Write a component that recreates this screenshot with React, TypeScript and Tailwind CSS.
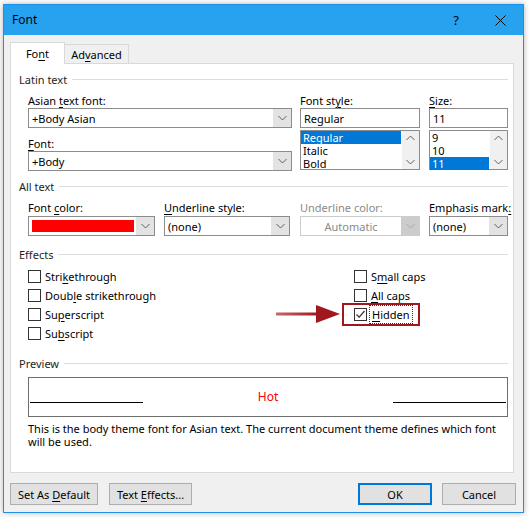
import React from 'react';

const Chevron = ({ up = false, color = '#606060' }: { up?: boolean; color?: string }) => (
  <svg width="9" height="6" viewBox="0 0 9 6" className="block">
    <path d={up ? 'M0.5 5 L4.5 1 L8.5 5' : 'M0.5 1 L4.5 5 L8.5 1'} fill="none" stroke={color} strokeWidth="1" />
  </svg>
);

const Header = ({ label }: { label: string }) => (
  <div className="flex items-center h-[14px]">
    <span className="text-[#1e1e1e] whitespace-nowrap">{label}</span>
    <div className="flex-1 h-px bg-[#dcdcdc] ml-[5px]" />
  </div>
);

const U = ({ children }: { children: React.ReactNode }) => (
  <span className="underline underline-offset-[2px]">{children}</span>
);

const Label = ({ children, h = 'h-[15px]', className = '' }: { children: React.ReactNode; h?: string; className?: string }) => (
  <div className={`${h} ${className} flex items-center`}>
    <span className="whitespace-nowrap">{children}</span>
  </div>
);

const Combo = ({ value, w, disabled = false, red = false }: { value?: string; w: string; disabled?: boolean; red?: boolean }) => (
  <div className={`${w} h-[20px] flex border ${disabled ? 'border-[#cccccc] bg-white' : 'border-[#8c8c8c] bg-white'}`}>
    <div className={`flex-1 flex items-center ${disabled ? 'justify-center text-[#8a8a8a]' : 'pl-[3px] text-black'}`}>
      {red ? <div className="w-[102px] h-[12px] bg-[#ff0000]" /> : value}
    </div>
    <div className={`w-[18px] flex items-center justify-center ${disabled ? 'bg-[#cccccc]' : 'bg-[#e3e3e3]'}`}>
      <Chevron color={disabled ? '#a8a8a8' : '#606060'} />
    </div>
  </div>
);

const ListBox = ({ items, selected, selW }: { items: string[]; selected: number; selW: string }) => (
  <div className="h-[40px] border border-[#8c8c8c] bg-white flex">
    <div className="flex-1 flex flex-col">
      {items.map((it, i) => (
        <div
          key={it}
          className={`h-[13px] leading-[13px] pl-[2px] ${i === selected ? `bg-[#0078d7] text-white ${selW}` : 'text-black'}`}
        >
          {it}
        </div>
      ))}
    </div>
    <div className="w-[17px] bg-[#f0f0f0] flex flex-col items-center justify-between py-[4px]">
      <Chevron up />
      <Chevron />
    </div>
  </div>
);

const Check = ({ label, checked = false }: { label: React.ReactNode; checked?: boolean }) => (
  <div className="flex items-center h-[19px]">
    <div className="w-[13px] h-[13px] border border-[#333333] bg-white flex items-center justify-center">
      {checked && (
        <svg width="11" height="11" viewBox="0 0 11 11">
          <path d="M1.5 5.5 L4.2 8.2 L9.5 2" fill="none" stroke="#333" strokeWidth="1.2" />
        </svg>
      )}
    </div>
    <span className="ml-[4px] text-black whitespace-nowrap">{label}</span>
  </div>
);

const Btn = ({ children, w, primary = false, className = '' }: { children: React.ReactNode; w: string; primary?: boolean; className?: string }) => (
  <div
    className={`${w} ${className} h-[22px] flex items-center justify-center bg-[#e1e1e1] text-black ${
      primary ? 'border-2 border-[#0078d7]' : 'border border-[#adadad]'
    }`}
  >
    <span className="whitespace-nowrap">{children}</span>
  </div>
);

export default function App() {
  return (
    <div className="w-[529px] h-[520px] bg-white pt-[4px] pl-[3px] font-['Noto_Sans',sans-serif] text-[11px] leading-none">
      <div className="w-[521px] h-[509px] border border-[#1e8fe3] bg-[#f0f0f0] flex flex-col shadow-[0_0_6px_rgba(0,0,0,0.3)]">
        {/* Title bar */}
        <div className="h-[30px] bg-[#27a2ef] flex items-center pl-[8px] pr-[17px] text-black">
          <span className="text-[12px]">Font</span>
          <span className="ml-auto text-[13px] mr-[36px]">?</span>
          <svg width="11" height="11" viewBox="0 0 11 11">
            <path d="M0.5 0.5 L10.5 10.5 M10.5 0.5 L0.5 10.5" stroke="#000" strokeWidth="1" />
          </svg>
        </div>

        <div className="flex-1 px-[6px]">
          {/* Tabs */}
          <div className="mt-[7px] flex items-end h-[21px]">
            <div className="relative z-10 w-[55px] h-[22px] -mb-px bg-white border border-b-0 border-[#d9d9d9] flex items-center justify-center text-black pb-[1px]">
              <span>
                Fo<U>n</U>t
              </span>
            </div>
            <div className="w-[64px] h-[19px] bg-[#f0f0f0] border border-l-0 border-b-0 border-[#d9d9d9] flex items-center justify-center text-black">
              <span>
                Ad<U>v</U>anced
              </span>
            </div>
          </div>

          {/* Panel */}
          <div className="relative w-[504px] h-[410px] bg-white border border-[#d9d9d9] pl-[8px] pr-[5px] flex flex-col">
            <div className="mt-[8px]">
              <Header label="Latin text" />
            </div>

            <div className="mt-[7px] ml-[9px] flex">
              <div className="w-[264px]">
                <Label>
                  Asian <U>t</U>ext font:
                </Label>
                <Combo value="+Body Asian" w="w-[264px]" />
                <Label className="mt-[8px]">
                  <U>F</U>ont:
                </Label>
                <Combo value="+Body" w="w-[264px]" />
              </div>
              <div className="w-[120px] ml-[8px]">
                <Label>
                  Font st<U>y</U>le:
                </Label>
                <div className="h-[20px] border border-[#8c8c8c] bg-white flex items-center pl-[3px]">Regular</div>
                <div className="mt-[2px]">
                  <ListBox items={['Regular', 'Italic', 'Bold']} selected={0} selW="w-[100px]" />
                </div>
              </div>
              <div className="w-[79px] ml-[9px]">
                <Label>
                  <U>S</U>ize:
                </Label>
                <div className="h-[20px] border border-[#8c8c8c] bg-white flex items-center pl-[3px]">11</div>
                <div className="mt-[2px]">
                  <ListBox items={['9', '10', '11']} selected={2} selW="w-[59px]" />
                </div>
              </div>
            </div>

            <div className="mt-[8px]">
              <Header label="All text" />
            </div>

            <div className="mt-[6px] ml-[9px] flex">
              <div className="w-[127px]">
                <Label h="h-[17px]">
                  Font <U>c</U>olor:
                </Label>
                <Combo w="w-[127px]" red />
              </div>
              <div className="w-[126px] ml-[9px]">
                <Label h="h-[17px]">
                  <U>U</U>nderline style:
                </Label>
                <Combo value="(none)" w="w-[126px]" />
              </div>
              <div className="w-[120px] ml-[10px]">
                <Label h="h-[17px]" className="text-[#8a8a8a]">
                  Underline color:
                </Label>
                <Combo value="Automatic" w="w-[120px]" disabled />
              </div>
              <div className="w-[79px] ml-[9px]">
                <Label h="h-[17px]">
                  Emphasis mark<U>:</U>
                </Label>
                <Combo value="(none)" w="w-[79px]" />
              </div>
            </div>

            <div className="mt-[11px]">
              <Header label="Effects" />
            </div>

            <div className="mt-[6px] ml-[9px] flex">
              <div className="w-[326px] flex flex-col">
                <Check label={<>Stri<U>k</U>ethrough</>} />
                <Check label={<>Doub<U>l</U>e strikethrough</>} />
                <Check label={<>Su<U>p</U>erscript</>} />
                <Check label={<>Su<U>b</U>script</>} />
              </div>
              <div className="relative flex flex-col">
                <Check label={<>S<U>m</U>all caps</>} />
                <Check label={<><U>A</U>ll caps</>} />
                <div className="relative">
                  <Check
                    checked
                    label={
                      <span className="outline outline-1 outline-dotted outline-[#333] outline-offset-[1px] px-[1px]">
                        <U>H</U>idden
                      </span>
                    }
                  />
                  <div className="absolute left-[-12px] top-[-2px] w-[78px] h-[23px] border-2 border-[#a0171c]" />
                  <svg className="absolute left-[-78px] top-[-2px]" width="65" height="22" viewBox="0 0 65 22">
                    <defs>
                      <linearGradient id="shaft" x1="0" x2="1" y1="0" y2="0">
                        <stop offset="0" stopColor="#c46a6d" />
                        <stop offset="1" stopColor="#a0171c" />
                      </linearGradient>
                    </defs>
                    <rect x="0" y="9.5" width="42" height="3" fill="url(#shaft)" />
                    <polygon points="40,2 64,11 40,20" fill="#a0171c" />
                  </svg>
                </div>
              </div>
            </div>

            <div className="mt-[13px]">
              <Header label="Preview" />
            </div>

            <div className="mt-[7px] ml-[9px] w-[480px] h-[40px] border border-[#6e6e6e] relative flex items-center justify-center">
              <span className="text-[#ff0000] text-[12px]">Hot</span>
              <div className="absolute left-[1px] top-[24px] w-[113px] h-px bg-black" />
              <div className="absolute right-[1px] top-[24px] w-[113px] h-px bg-black" />
            </div>

            <div className="mt-[5px] ml-[9px] w-[480px] leading-[13px] text-black">
              This is the body theme font for Asian text. The current document theme defines which font will be used.
            </div>
          </div>

          {/* Buttons */}
          <div className="mt-[10px] flex w-[506px]">
            <Btn w="w-[88px]">
              Set As <U>D</U>efault
            </Btn>
            <Btn w="w-[83px]" className="ml-[11px]">
              Text <U>E</U>ffects...
            </Btn>
            <Btn w="w-[74px]" className="ml-auto" primary>
              OK
            </Btn>
            <Btn w="w-[74px]" className="ml-[10px]">
              Cancel
            </Btn>
          </div>
        </div>
      </div>
    </div>
  );
}
